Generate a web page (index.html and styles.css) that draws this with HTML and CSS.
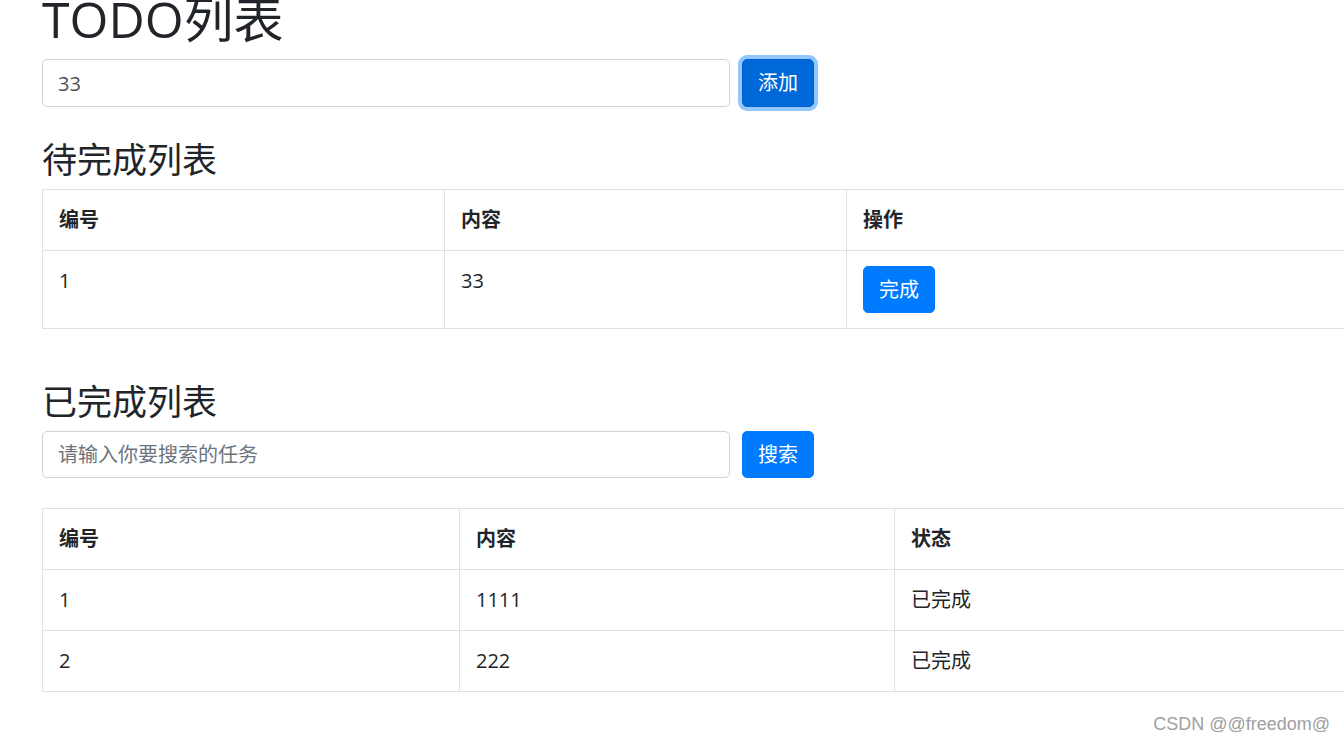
FILE: index.html
```html
<!DOCTYPE html>
<html lang="zh-CN">
<head>
    <meta charset="UTF-8">
    <meta name="viewport" content="width=device-width, initial-scale=1.0">
    <title>TODO列表</title>
    <link rel="stylesheet" href="styles.css">
</head>
<body>
    <div class="container">
        <h1 class="page-title">TODO列表</h1>

        <div class="input-row">
            <input type="text" class="form-control" value="33">
            <button class="btn btn-primary focused">添加</button>
        </div>

        <h3 class="section-title">待完成列表</h3>
        <table class="table pending-table">
            <thead>
                <tr>
                    <th class="col-id">编号</th>
                    <th class="col-content">内容</th>
                    <th>操作</th>
                </tr>
            </thead>
            <tbody>
                <tr>
                    <td>1</td>
                    <td>33</td>
                    <td><button class="btn btn-primary">完成</button></td>
                </tr>
            </tbody>
        </table>

        <h3 class="section-title">已完成列表</h3>
        <div class="input-row search-row">
            <input type="text" class="form-control" placeholder="请输入你要搜索的任务">
            <button class="btn btn-primary">搜索</button>
        </div>

        <table class="table done-table">
            <thead>
                <tr>
                    <th class="col-id">编号</th>
                    <th class="col-content">内容</th>
                    <th>状态</th>
                </tr>
            </thead>
            <tbody>
                <tr>
                    <td>1</td>
                    <td>1111</td>
                    <td>已完成</td>
                </tr>
                <tr>
                    <td>2</td>
                    <td>222</td>
                    <td>已完成</td>
                </tr>
            </tbody>
        </table>
    </div>

    <div class="watermark">CSDN @@freedom@</div>
</body>
</html>
```

FILE: styles.css
```css
html {
    overflow: hidden;
}

body {
    margin: 0;
    font-family: "Open Sans", "Noto Sans CJK SC", sans-serif;
    font-size: 20px;
    line-height: 1.5;
    color: #212529;
    background-color: #fff;
}

.container {
    width: 1388px;
    padding-left: 42px;
}

.page-title {
    font-size: 50px;
    font-weight: 400;
    line-height: 60px;
    height: 60px;
    margin: -11px 0 10px;
}

.input-row {
    display: flex;
    gap: 12px;
    margin-bottom: 30px;
}

.search-row .form-control {
    height: 47px;
}

.form-control {
    width: 688px;
    height: 48px;
    box-sizing: border-box;
    padding: 0 15px;
    font-family: inherit;
    font-size: 20px;
    color: #495057;
    border: 1px solid #ced4da;
    border-radius: 5px;
    outline: none;
}

.form-control::placeholder {
    color: #6c757d;
}

.btn {
    height: 47px;
    padding: 0 15px;
    font-family: inherit;
    font-size: 20px;
    line-height: 1.5;
    color: #fff;
    border: 1px solid transparent;
    border-radius: 5px;
    cursor: pointer;
}

.btn-primary {
    background-color: #007bff;
    border-color: #007bff;
}

.btn-primary.focused {
    height: 48px;
    background-color: #0069d9;
    border-color: #0062cc;
    box-shadow: 0 0 0 4px rgba(38, 143, 255, 0.5);
}

.section-title {
    font-size: 35px;
    font-weight: 400;
    line-height: 42px;
    height: 40px;
    padding-top: 2px;
    margin: 0 0 10px;
}

.table {
    width: 100%;
    border-collapse: collapse;
    table-layout: fixed;
    margin-bottom: 20px;
}

.table th,
.table td {
    box-sizing: border-box;
    border: 1px solid #dee2e6;
    padding: 15px 15px 15px 16px;
    text-align: left;
    vertical-align: top;
}

.table th {
    font-weight: 700;
}

.pending-table {
    margin-bottom: 50px;
}

.pending-table .col-id,
.pending-table .col-content {
    width: 402px;
}

.done-table .col-id {
    width: 417px;
}

.done-table .col-content {
    width: 435px;
}

.watermark {
    position: absolute;
    right: 14px;
    bottom: 6px;
    font-family: "Liberation Sans", Arial, sans-serif;
    font-size: 18px;
    color: #a0a0a0;
}
```
